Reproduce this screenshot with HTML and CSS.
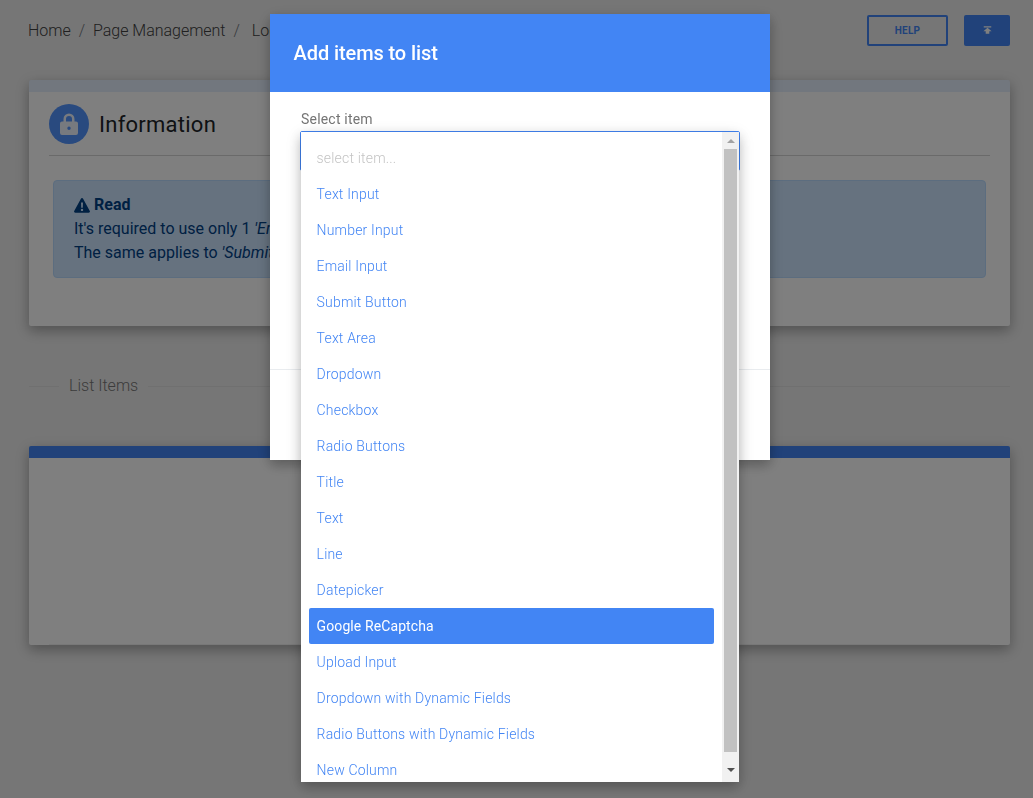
FILE: index.html
```html
<!DOCTYPE html>
<html lang="en">
<head>
<meta charset="utf-8">
<title>Add items to list</title>
<link rel="stylesheet" href="styles.css">
</head>
<body>
<div class="page">
  <header class="topbar">
    <nav class="crumbs">
      <span>Home</span><span class="sep">/</span><span>Page Management</span><span class="sep">/</span><span class="crumb-last">Login</span>
    </nav>
    <div class="actions">
      <button class="btn-outline">HELP</button>
      <button class="btn-solid">
        <svg class="upload-icon" viewBox="0 0 12 10"><path d="M1 0h10v1.5H1zM6 2 11.5 6.6H8.4V10H3.6V6.6H.5z"/></svg>
      </button>
    </div>
  </header>

  <section class="card card-info">
    <div class="card-head">
      <span class="lock-badge">
        <svg class="lock-icon" viewBox="0 0 18 22"><path fill-rule="evenodd" d="M3.5 8.5V6a5.5 5.500 0 0 1 11 0v2.500H16a2 2 0 0 1 2 2V20a2 2 0 0 1-2 2H2a2 2 0 0 1-2-2v-9.500a2 2 0 0 1 2-2zM6 8.500h6V6a3 3 0 0 0-6 0zM9 13.500a1.700 1.700 0 1 0 0 3.400 1.700 1.700 0 0 0 0-3.400z"/></svg>
      </span>
      <h2 class="card-title">Information</h2>
    </div>
    <div class="alert">
      <div class="alert-title">
        <svg class="warn-icon" viewBox="0 0 16 15"><path fill-rule="evenodd" d="M8 0c.5 0 .9.300 1.100.700l6.700 12.300c.4.800-.1 1.800-1.100 1.800H1.300C.3 14.800-.2 13.800.2 13L6.900.7C7.100.3 7.500 0 8 0zM7 4.500l.2 5.300h1.600L9 4.500zM8 10.700a1.200 1.200 0 1 0 0 2.400 1.200 1.200 0 0 0 0-2.400z"/></svg>
        <strong>Read</strong>
      </div>
      <div>It's required to use only 1 <em>'Email Input'</em> item in a list.</div>
      <div>The same applies to <em>'Submit Button'</em>.</div>
    </div>
  </section>

  <div class="divider"><span class="divider-line short"></span><span class="divider-text">List Items</span><span class="divider-line"></span></div>

  <section class="card card-list">
    <div class="card-list-body"></div>
  </section>
</div>

<div class="overlay">
  <div class="modal">
    <div class="modal-head">Add items to list</div>
    <div class="modal-body">
      <label class="field-label">Select item</label>
      <div class="select">
        <div class="dropdown">
          <ul class="options">
            <li class="placeholder">select item...</li>
            <li>Text Input</li>
            <li>Number Input</li>
            <li>Email Input</li>
            <li>Submit Button</li>
            <li>Text Area</li>
            <li>Dropdown</li>
            <li>Checkbox</li>
            <li>Radio Buttons</li>
            <li>Title</li>
            <li>Text</li>
            <li>Line</li>
            <li>Datepicker</li>
            <li class="active">Google ReCaptcha</li>
            <li>Upload Input</li>
            <li>Dropdown with Dynamic Fields</li>
            <li>Radio Buttons with Dynamic Fields</li>
            <li>New Column</li>
          </ul>
          <div class="scrollbar">
            <span class="arrow arrow-up"></span>
            <span class="thumb"></span>
            <span class="arrow arrow-down"></span>
          </div>
        </div>
      </div>
    </div>
    <div class="modal-foot"></div>
  </div>
</div>
</body>
</html>
```
FILE: styles.css
```css
* { box-sizing: border-box; }
html, body { margin: 0; height: 100%; overflow: hidden; }
body { background: #ececec; font-family: Roboto, "Liberation Sans", sans-serif; color: #212529; font-size: 16px; }

.page { padding: 15px 23px 0 29px; }

.topbar { display: flex; justify-content: space-between; align-items: center; height: 31px; }
.crumbs { display: flex; font-weight: 300; font-size: 16px; color: #404040; margin-left: -1px; letter-spacing: -.02px; }
.sep { margin: 0 8px; color: #6c757d; }
.crumb-last { margin-left: 4px; }
.actions { display: flex; gap: 16px; }
.btn-outline, .btn-solid { height: 31px; border-radius: 2px; font-family: inherit; padding: 0; display: flex; align-items: center; justify-content: center; }
.btn-outline { width: 81px; background: transparent; border: 2px solid #4285f4; color: #4285f4; font-size: 10px; font-weight: 700; letter-spacing: .25px; }
.btn-solid { width: 46px; background: #4285f4; border: 0; }
.upload-icon { width: 9px; height: 8px; fill: #fff; margin-top: -2px; }

.card { background: #fff; border-radius: 2px; box-shadow: 0 5px 11px rgba(0,0,0,.18), 0 4px 15px rgba(0,0,0,.15); }
.card-info { margin-top: 34px; height: 246px; border-top: 12px solid #e4eefc; padding: 12px 20px 0; }
.card-head { display: flex; align-items: center; gap: 10px; height: 52px; padding-bottom: 11px; border-bottom: 1px solid #d4d4d4; }
.lock-badge { width: 40px; height: 40px; border-radius: 50%; background: #5294ff; display: flex; align-items: center; justify-content: center; }
.lock-icon { width: 18px; height: 22px; fill: #fff; opacity: .9; }
.card-title { margin: 1px 0 0; font-size: 22px; font-weight: 400; line-height: 38px; letter-spacing: .25px; color: #212529; }

.alert { margin: 24px 4px 0; height: 98px; padding: 12px 20px; line-height: 24px; background: #cce5ff; border: 1px solid #b8daff; border-radius: 4px; color: #004085; }
.alert-title { display: flex; align-items: center; gap: 4px; }
.alert-title strong { font-weight: 700; }
.warn-icon { width: 16px; height: 15px; fill: #004085; }

.divider { display: flex; align-items: center; margin-top: 48px; height: 24px; }
.divider-line { flex: 1; height: 1px; background: #e0e0e0; }
.divider-line.short { flex: 0 0 30px; }
.divider-text { padding: 0 10px 2px; font-weight: 300; color: #777; }

.card-list { margin-top: 48px; height: 199px; border-top: 12px solid #4285f4; padding: 0 20px; }
.card-list-body { height: 100%; border-bottom: 1px solid #f0f0f0; }

.overlay { position: fixed; inset: 0; background: rgba(0,0,0,.5); }
.modal { position: absolute; left: 270px; top: 14px; width: 500px; height: 446px; background: #fff; box-shadow: 0 5px 11px rgba(0,0,0,.18), 0 4px 15px rgba(0,0,0,.15); display: flex; flex-direction: column; }
.modal-head { height: 78px; flex: none; background: #4285f4; color: #fff; font-size: 20px; font-weight: 500; line-height: 78px; padding-left: 23.600px; letter-spacing: -.1px; }
.modal-body { padding: 17px 30px 0; height: 278px; flex: none; border-bottom: 1px solid #e9ecef; }
.field-label { display: block; font-size: 14px; line-height: 20px; letter-spacing: .2px; color: #757575; margin-left: 1px; margin-bottom: 2px; }
.select { position: relative; height: 40px; border: 1px solid #4285f4; border-radius: 2px; background: #fff; }
.dropdown { position: absolute; left: 0; top: 0; width: 438px; height: 650px; background: #fff; box-shadow: 0 5px 11px rgba(0,0,0,.18), 0 4px 15px rgba(0,0,0,.15); display: flex; overflow: hidden; z-index: 1; }
.options { flex: 1; margin: 0; padding: 8px 8px 0; list-style: none; overflow: hidden; }
.options li { height: 36px; line-height: 36px; padding-left: 7.600px; font-size: 14px; font-weight: 300; letter-spacing: .18px; color: #4285f4; border-radius: 2px; }
.options .placeholder { color: #c4c4c4; }
.options .active { background: #4285f4; color: #fff; font-weight: 400; letter-spacing: .1px; }

.scrollbar { flex: 0 0 17px; background: #f1f1f1; display: flex; flex-direction: column; align-items: center; padding: 0 1px; }
.arrow { width: 0; height: 0; border-left: 4px solid transparent; border-right: 4px solid transparent; flex: none; }
.arrow-up { border-bottom: 4px solid #a3a3a3; margin-top: 7px; }
.arrow-down { border-top: 4px solid #505050; margin-top: 16px; }
.thumb { width: 13px; height: 603px; background: #c1c1c1; margin-top: 6px; flex: none; }
```
